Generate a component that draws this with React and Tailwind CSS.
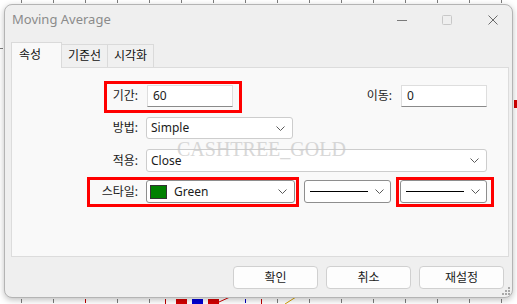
import { useState } from "react";

const TICKS = [21, 53, 85, 117, 149, 181, 213, 245, 277, 309, 341, 373, 405, 437, 469, 501];

function Chevron() {
  return (
    <svg width="9" height="5" viewBox="0 0 9 5" className="shrink-0">
      <path d="M0.5 0.5 L4.5 4.5 L8.5 0.5" fill="none" stroke="#5a5a5a" strokeWidth="1" />
    </svg>
  );
}

function Backdrop() {
  return (
    <svg width="517" height="304" className="absolute left-0 top-0">
      <rect width="517" height="304" fill="#ffffff" />
      {TICKS.map((x) => (
        <rect key={"t" + x} x={x} y="0" width="1" height="3" fill="#7d7d7d" />
      ))}
      <rect x="0" y="48" width="3" height="1" fill="#7d7d7d" />
      {TICKS.map((x) => (
        <rect
          key={"b" + x}
          x={x}
          y="299"
          width="1"
          height="4"
          fill={x === 85 ? "#c00000" : x === 245 ? "#0000c0" : "#7d7d7d"}
        />
      ))}
      <rect x="165" y="299" width="1" height="5" fill="#c00000" />
      <rect x="261" y="299" width="1" height="5" fill="#c00000" />
      <rect x="176" y="299" width="11" height="5" fill="#d40000" />
      <rect x="192" y="299" width="11" height="5" fill="#0000d4" />
      <rect x="208" y="299" width="11" height="5" fill="#d40000" />
      <path d="M219 302 L230 297" stroke="#d40000" strokeWidth="1" />
      <path d="M285 304 L296 297" stroke="#d4a000" strokeWidth="1" />
      <rect x="514" y="100" width="3" height="8" fill="#d40000" />
    </svg>
  );
}

function LineSelect({ className = "" }) {
  return (
    <div
      className={
        "flex h-[23px] w-[87px] items-center rounded-[3px] border border-[#8e8e8e] bg-white pl-[5px] pr-[6px] " +
        className
      }
    >
      <div className="h-px w-[58px] bg-black" />
      <div className="flex-1" />
      <Chevron />
    </div>
  );
}

function Button({ children }) {
  return (
    <button className="flex h-[23px] w-[85px] items-center justify-center rounded-[4px] border border-[#d0d0d0] bg-[#fdfdfd] text-[12px] text-[#1b1b1b]">
      {children}
    </button>
  );
}

export default function App() {
  const [tab, setTab] = useState(0);
  const tabs = ["속성", "기준선", "시각화"];

  return (
    <div className="relative h-[304px] w-[517px] overflow-hidden font-['Noto_Sans','Noto_Sans_CJK_KR',sans-serif] text-[12px] text-[#1b1b1b]">
      <Backdrop />

      <div className="absolute left-[4px] top-[4px] flex h-[294px] w-[509px] flex-col rounded-[8px] border border-[#b4b4b4] bg-[#efefef] shadow-[0_2px_6px_rgba(0,0,0,0.25)]">
        {/* title bar */}
        <div className="flex h-[29px] items-center pl-[7px] pr-[14px]">
          <span className="text-[13px] text-[#8b8b8b]">Moving Average</span>
          <div className="flex-1" />
          <svg width="10" height="10" viewBox="0 0 10 10">
            <path d="M0 5.5 H10" stroke="#7a7a7a" strokeWidth="1" />
          </svg>
          <svg width="10" height="10" viewBox="0 0 10 10" className="ml-[35px]">
            <rect x="0.5" y="0.5" width="9" height="9" rx="1" fill="none" stroke="#c8c8c8" />
          </svg>
          <svg width="10" height="10" viewBox="0 0 10 10" className="ml-[36px]">
            <path d="M0.5 0.5 L9.5 9.5 M9.5 0.5 L0.5 9.5" stroke="#6a6a6a" strokeWidth="1" />
          </svg>
        </div>

        {/* tabs */}
        <div className="mt-[8px] flex h-[25px] items-end pl-[6px]">
          {tabs.map((t, i) =>
            i === tab ? (
              <div
                key={t}
                onClick={() => setTab(i)}
                className="relative z-10 -mb-px flex h-[26px] w-[51px] items-start border border-b-0 border-[#dadada] bg-[#f9f9f9] pl-[7px] pt-[3px] text-[12px] text-[#111]"
              >
                {t}
              </div>
            ) : (
              <div
                key={t}
                onClick={() => setTab(i)}
                className="flex h-[23px] w-[46px] items-center justify-center border border-b-0 border-l-0 border-[#dadada] bg-[#f0f0f0] text-[12px] text-[#111]"
              >
                {t}
              </div>
            )
          )}
        </div>

        {/* panel */}
        <div className="relative ml-[6px] h-[190px] w-[498px] border border-[#dcdcdc] bg-[#f9f9f9] pt-[17px]">
          <div className="flex h-[22px] items-center">
            <span className="w-[126px] text-right">기간:</span>
            <div className="ml-[9px] flex h-[22px] w-[86px] items-center border border-[#dedede] border-b-[#8a8a8a] bg-white pl-[5px]">
              60
            </div>
            <span className="w-[159px] text-right">이동:</span>
            <div className="ml-[9px] flex h-[22px] w-[86px] items-center border border-[#dedede] border-b-[#8a8a8a] bg-white pl-[5px]">
              0
            </div>
          </div>

          <div className="mt-[10px] flex h-[22px] items-center">
            <span className="w-[126px] text-right">방법:</span>
            <div className="ml-[8px] flex h-[22px] w-[147px] items-center rounded-[3px] border border-[#cdcdcd] bg-white pl-[4px] pr-[7px]">
              <span className="flex-1">Simple</span>
              <Chevron />
            </div>
          </div>

          <div className="mt-[10px] flex h-[23px] items-center">
            <span className="w-[126px] text-right">적용:</span>
            <div className="ml-[8px] flex h-[23px] w-[341px] items-center rounded-[3px] border border-[#cdcdcd] bg-white pl-[4px] pr-[7px]">
              <span className="flex-1">Close</span>
              <Chevron />
            </div>
          </div>

          <div className="mt-[8px] flex h-[23px] items-center">
            <span className="w-[126px] text-right">스타일:</span>
            <div className="ml-[8px] flex h-[23px] w-[149px] items-center rounded-[3px] border border-[#8e8e8e] bg-white pl-[3px] pr-[7px]">
              <div className="h-[14px] w-[17px] border border-[#333] bg-[#008000]" />
              <span className="ml-[7px] flex-1">Green</span>
              <Chevron />
            </div>
            <LineSelect className="ml-[9px]" />
            <LineSelect className="ml-[9px]" />
          </div>

          {/* watermark */}
          <div className="pointer-events-none absolute left-[165px] top-[71px] font-['Liberation_Serif',serif] text-[20px] leading-[20px] text-[#c8c8c8] opacity-70">
            CASHTREE_GOLD
          </div>

          {/* red highlight boxes */}
          <div className="pointer-events-none absolute left-[92px] top-[13px] h-[32px] w-[138px] border-[3px] border-[#ff0000]" />
          <div className="pointer-events-none absolute left-[75px] top-[109px] h-[30px] w-[212px] border-[3px] border-[#ff0000]" />
          <div className="pointer-events-none absolute left-[384px] top-[109px] h-[30px] w-[98px] border-[3px] border-[#ff0000]" />
        </div>

        {/* buttons */}
        <div className="mt-[9px] flex justify-end gap-[8px] pr-[8px]">
          <Button>확인</Button>
          <Button>취소</Button>
          <Button>재설정</Button>
        </div>

        {/* resize grip */}
        <svg width="8" height="8" viewBox="0 0 8 8" className="absolute bottom-[2px] right-[2px]">
          {[
            [6, 0],
            [3, 3],
            [6, 3],
            [0, 6],
            [3, 6],
            [6, 6],
          ].map(([x, y]) => (
            <rect key={x + "-" + y} x={x} y={y} width="2" height="2" fill="#a8a8a8" />
          ))}
        </svg>
      </div>
    </div>
  );
}
